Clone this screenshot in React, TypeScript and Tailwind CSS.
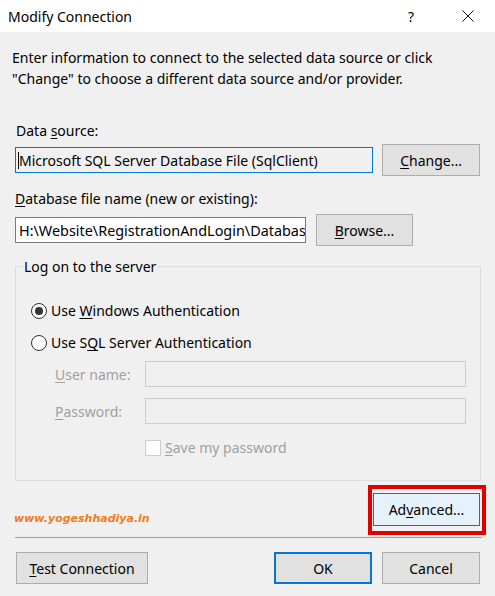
const font = "font-['Noto_Sans','Open_Sans',sans-serif]";

function U({ children }: { children: string }) {
  return <span className="underline underline-offset-[2px] decoration-1">{children}</span>;
}

function Btn({
  children,
  className = "",
}: {
  children: React.ReactNode;
  className?: string;
}) {
  return (
    <div
      className={`flex items-center justify-center h-[32px] bg-[#e1e1e1] border border-[#adadad] text-[14px] text-black ${className}`}
    >
      {children}
    </div>
  );
}

function Radio({ checked }: { checked?: boolean }) {
  return (
    <div className="w-[16px] h-[16px] rounded-full border border-[#333] bg-white flex items-center justify-center">
      {checked && <div className="w-[8px] h-[8px] rounded-full bg-[#333]" />}
    </div>
  );
}

export default function App() {
  return (
    <div className={`w-[495px] h-[596px] bg-[#f0f0f0] text-[14px] text-black overflow-hidden ${font}`}>
      {/* title bar */}
      <div className="h-[32px] bg-white flex items-center pl-[8px]">
        <span className="text-[14px] leading-[21px]">Modify Connection</span>
        <span className="ml-auto mr-[48px] text-[14px]">?</span>
        <svg width="12" height="12" viewBox="0 0 12 12" className="mr-[21px]">
          <path d="M0.5 0.5 L11.5 11.5 M11.5 0.5 L0.5 11.5" stroke="#111" strokeWidth="1" />
        </svg>
      </div>

      <div className="pl-[12px] pt-[15px] leading-[21px]">
        <div>Enter information to connect to the selected data source or click</div>
        <div>"Change" to choose a different data source and/or provider.</div>
      </div>

      <div className="px-[15px]">
        <div className="mt-[31px] leading-[21px] pl-[1px]">
          Data <U>s</U>ource:
        </div>
        <div className="mt-[3px] flex items-center">
          <div className="w-[359px] h-[26px] border border-[#0078d7] bg-[#f0f0f0] flex items-center pl-[2px]">
            <div className="w-[1px] h-[17px] bg-black" />
            <span className="leading-[21px]">Microsoft SQL Server Database File (SqlClient)</span>
          </div>
          <Btn className="ml-[9px] w-[98px]">
            <span>
              <U>C</U>hange...
            </span>
          </Btn>
        </div>

        <div className="mt-[12px] leading-[21px]">
          <U>D</U>atabase file name (new or existing):
        </div>
        <div className="mt-[5px] flex items-center">
          <div className="w-[291px] h-[26px] border border-[#7a7a7a] bg-white flex items-center pl-[3px] overflow-hidden whitespace-nowrap">
            <span className="leading-[21px] text-[14.4px]">H:\Website\RegistrationAndLogin\Databas</span>
          </div>
          <Btn className="ml-[10px] w-[97px]">
            <span>
              <U>B</U>rowse...
            </span>
          </Btn>
        </div>

        <fieldset className="mt-[10px] w-[466px] border border-[#dcdcdc] px-[7px] pb-[22px]">
          <legend className="px-[1px] leading-[21px]">Log on to the server</legend>
          <div className="mt-[23px] ml-[8px] flex items-center h-[21px] gap-[4px]">
            <Radio checked />
            <span>
              Use <U>W</U>indows Authentication
            </span>
          </div>
          <div className="mt-[11px] ml-[8px] flex items-center h-[21px] gap-[4px]">
            <Radio />
            <span>
              Use S<U>Q</U>L Server Authentication
            </span>
          </div>
          <div className="mt-[8px] flex items-center text-[#a0a0a0]">
            <span className="ml-[32px] w-[90px]">
              <U>U</U>ser name:
            </span>
            <div className="w-[321px] h-[26px] border border-[#cccccc]" />
          </div>
          <div className="mt-[11px] flex items-center text-[#a0a0a0]">
            <span className="ml-[32px] w-[90px]">
              <U>P</U>assword:
            </span>
            <div className="w-[321px] h-[26px] border border-[#cccccc]" />
          </div>
          <div className="mt-[13px] ml-[122px] flex items-center h-[21px] gap-[4px] text-[#a0a0a0]">
            <div className="w-[16px] h-[16px] border border-[#cccccc] bg-white" />
            <span>
              <U>S</U>ave my password
            </span>
          </div>
        </fieldset>

        <div className="mt-[4px] flex items-center">
          <span className="ml-[-1px] mt-[19px] text-[11px] font-bold italic text-[#f07d16] font-['DejaVu_Sans',sans-serif]">
            www.yogeshhadiya.in
          </span>
          <div className="ml-auto mr-[-6px] border-4 border-[#e00000] pt-[4px] pb-[5px] pl-[1px] pr-[2px]">
            <div className="w-[107px] h-[33px] bg-[#e5f1fb] border border-[#0078d7] flex items-center justify-center">
              <span>
                Ad<U>v</U>anced...
              </span>
            </div>
          </div>
        </div>

        <div className="mt-[2px] h-[1px] w-[467px] bg-[#a0a0a0]" />

        <div className="mt-[14px] flex items-center">
          <Btn className="ml-[1px] w-[132px]">
            <span>
              <U>T</U>est Connection
            </span>
          </Btn>
          <div className="ml-auto flex items-center">
            <div className="flex items-center justify-center w-[98px] h-[32px] bg-[#e1e1e1] border-2 border-[#0078d7]">
              OK
            </div>
            <Btn className="ml-[10px] w-[98px]">Cancel</Btn>
          </div>
        </div>
      </div>
    </div>
  );
}
